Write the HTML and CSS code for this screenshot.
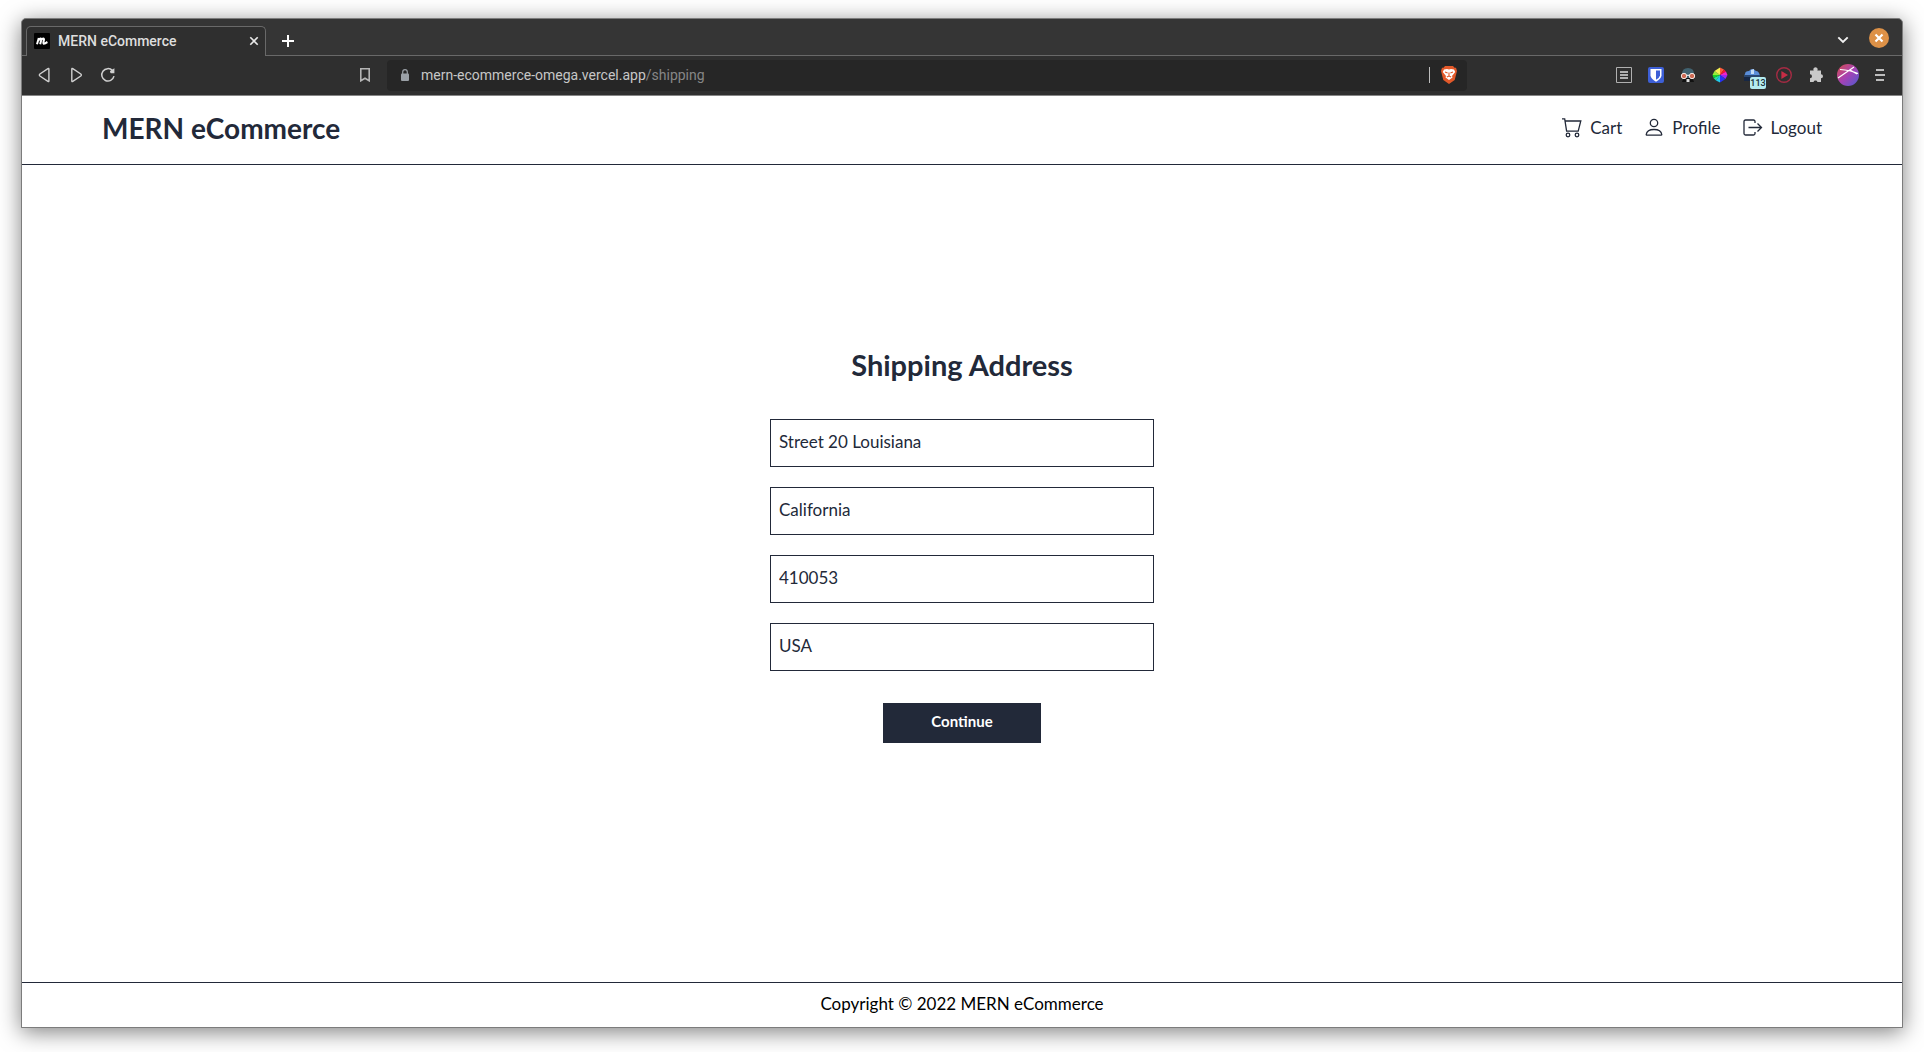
FILE: index.html
```html
<!DOCTYPE html>
<html lang="en">
<head>
<meta charset="utf-8">
<meta name="viewport" content="width=device-width, initial-scale=1">
<title>MERN eCommerce</title>
<link rel="stylesheet" href="styles.css">
</head>
<body>
<div class="window">
  <div class="tab-strip">
    <div class="tab">
      <svg class="favicon" viewBox="0 0 16 16" aria-hidden="true"><rect width="16" height="16" rx="1" fill="#000"/><path d="M3 11.200 4.800 5M4.400 7.600C5.600 5 7.800 4.800 7.200 7L6.200 11.200M6.900 7.600C8.200 5 10.600 4.800 9.900 7.200 9.200 9.600 9 11 10.400 10.600 11.600 10.200 12.300 9.600 13.400 9" fill="none" stroke="#fff" stroke-width="2"/></svg>
      <span class="tab-title">MERN eCommerce</span>
      <button class="icon-btn tab-close" type="button" aria-label="Close tab"><svg width="10" height="10" viewBox="0 0 10 10"><path d="M1.3 1.3 8.7 8.7M8.7 1.3 1.3 8.7" stroke="#e8e8e8" stroke-width="1.6"/></svg></button>
    </div>
    <button class="icon-btn new-tab" type="button" aria-label="New tab"><svg width="12" height="12" viewBox="0 0 12 12"><path d="M6 0v12M0 6h12" stroke="#fff" stroke-width="2"/></svg></button>
    <div class="window-controls">
      <button class="icon-btn tab-search" type="button" aria-label="Search tabs"><svg width="12" height="8" viewBox="0 0 12 8"><path d="M1.3 1.3 6 6l4.7-4.7" fill="none" stroke="#f2f2f2" stroke-width="1.9"/></svg></button>
      <button class="icon-btn" type="button" aria-label="Close window"><svg width="20" height="20" viewBox="0 0 20 20"><circle cx="10" cy="10" r="10" fill="#dd9147"/><path d="M6.5 6.5l7 7M13.5 6.5l-7 7" stroke="#fff" stroke-width="2.2"/></svg></button>
    </div>
  </div>
  <div class="toolbar">
    <div class="nav-tools">
      <button class="icon-btn" type="button" aria-label="Back"><svg width="16" height="16" viewBox="0 0 16 16"><path d="M12.9 2.1v11.800q0 1-1 .5L3.900 9q-1.100-1 0-2l8-5.400q1-.5 1 .5z" fill="none" stroke="#d0d0d0" stroke-width="1.4"/></svg></button>
      <button class="icon-btn" type="button" aria-label="Forward"><svg width="16" height="16" viewBox="0 0 16 16"><path d="M3.800 2.100v11.800q0 1 1 .5L12.800 9q1.100-1 0-2l-8-5.400q-1-.5-1 .5z" fill="none" stroke="#d0d0d0" stroke-width="1.4"/></svg></button>
      <button class="icon-btn" type="button" aria-label="Reload"><svg width="16" height="16" viewBox="0 0 16 16"><path d="M14 9.200A6.200 6.200 0 1 1 12.500 3.600" fill="none" stroke="#d0d0d0" stroke-width="1.5"/><path d="M14.400 1.200v5h-3.600q-1.800-2 .4-3z" fill="#d0d0d0"/></svg></button>
      <button class="icon-btn bookmark" type="button" aria-label="Bookmark this page"><svg width="12" height="14" viewBox="0 0 12 14"><path d="M1.800.8h8.400v12L6 10.300l-4.200 2.500z" fill="none" stroke="#b5b5b5" stroke-width="1.6"/></svg></button>
    </div>
    <div class="address">
      <svg class="lock" width="8" height="12" viewBox="0 0 8 12" aria-hidden="true"><rect y="4.500" width="8" height="7.500" rx="1" fill="#9aa0a6"/><path d="M1.700 5V3a2.300 2.300 0 0 1 4.600 0v2" fill="none" stroke="#9aa0a6" stroke-width="1.2"/></svg>
      <span class="url">mern-ecommerce-omega.vercel.app<span class="path">/shipping</span></span>
      <button class="icon-btn shields" type="button" aria-label="Brave Shields"><svg width="16" height="18" viewBox="0 0 16 18"><path d="M4 0h8l1.500 1.700H15L16 5l-2.300 9L8 18l-5.700-4L0 5l1-3.300h1.500z" fill="#e2592a"/><path d="M3 3.500l3-.5 2 .5 2-.5 3 .5L14.200 6 11 10l.5 1.500L8 14 4.500 11.500 5 10 1.800 6z" fill="#fff"/><path d="M4 6l2.600 1M12 6l-2.600 1M8 6.500v3.500M5.800 11l2.200-1 2.200 1" stroke="#e2592a" stroke-width="1.1" fill="none"/></svg></button>
    </div>
    <div class="extensions">
      <button class="icon-btn" type="button" aria-label="Reader list"><svg width="16" height="16" viewBox="0 0 16 16"><path d="M.5.5h15v15H.5z" fill="none" stroke="#b0b0b0"/><path d="M4 5h8M4 8h8M4 11h8" stroke="#b0b0b0" stroke-width="1.8"/></svg></button>
      <button class="icon-btn" type="button" aria-label="Bitwarden"><svg width="16" height="16" viewBox="0 0 16 16"><rect width="16" height="16" rx="2" fill="#3d5fd6"/><path d="M2.500 2h11v6.500Q13 12 8 14.800 3 12 2.500 8.500z" fill="#fff"/><path d="M8 3.600h4V8.500Q11.600 10.700 8 12.800z" fill="#3d5fd6"/></svg></button>
      <button class="icon-btn" type="button" aria-label="Incognito extension"><svg width="16" height="16" viewBox="0 0 16 16"><path d="M2 7Q2 1 8 1t6 6l-1 4H3z" fill="#416270"/><path d="M3.500 11h9L14 15H2z" fill="#111"/><path d="M6.500 12h3v3h-3z" fill="#ddd"/><circle cx="4" cy="9" r="2.700" fill="#cf6b55" stroke="#f2e8e3"/><circle cx="12" cy="9" r="2.700" fill="#cf6b55" stroke="#f2e8e3"/><path d="M7 8.300h2" stroke="#fff"/></svg></button>
      <button class="icon-btn" type="button" aria-label="Color picker"><svg width="16" height="16" viewBox="0 0 16 16"><path d="M8 8V.5l4 2z" fill="#ff5a3a"/><path d="M8 8l4-5.500 2 2z" fill="#f13"/><path d="M8 8l6-3.500L15.500 8z" fill="#f024c8"/><path d="M8 8h7.500l-2 4z" fill="#9d25f3"/><path d="M8 8l5.500 4L8 15.500z" fill="#2632f2"/><path d="M8 8v7.500l-4-2z" fill="#21c9ed"/><path d="M8 8l-4 5.500L1.500 11z" fill="#25e3a2"/><path d="M8 8l-6.500 3L.5 8z" fill="#19d52a"/><path d="M8 8H.5l2-4z" fill="#9aec39"/><path d="M8 8L2.500 4 8 .5z" fill="#f7ef51"/></svg></button>
      <button class="icon-btn counter" type="button" aria-label="Weather extension, 113"><svg width="16" height="16" viewBox="0 0 16 16"><path d="M1 7Q1 4 5 4q3-4 7 0 3 0 4 5H0z" fill="#5a8dd8"/><path d="M7 3l3-1v5H7z" fill="#c4dcf4"/><path d="M0 8h16v3H0z" fill="#29466f"/><path d="M0 10h16v4H0z" fill="#172744"/></svg><span class="badge">113</span></button>
      <button class="icon-btn" type="button" aria-label="Video extension"><svg width="16" height="16" viewBox="0 0 16 16"><circle cx="8" cy="8" r="7.300" fill="none" stroke="#a52b43" stroke-width="1.4"/><path d="M5.400 4l6.600 4-6.600 4z" fill="#c72c45"/></svg></button>
      <button class="icon-btn" type="button" aria-label="Extensions"><svg width="16" height="16" viewBox="0 0 16 16"><path d="M2 3.500h3.700a2.100 2.100 0 1 1 3.600 0H13v3.700a2 2 0 1 1 0 4V15H9.500a2.100 2.100 0 0 0-4 0H2v-3.700a2 2 0 0 0 0-4z" fill="#cacaca"/></svg></button>
      <button class="icon-btn" type="button" aria-label="Account"><svg width="22" height="22" viewBox="0 0 22 22"><defs><linearGradient id="avatar" x1="0" y1="0" x2="1" y2="1"><stop offset=".1" stop-color="#ce4b61"/><stop offset=".5" stop-color="#a642b4"/><stop offset="1" stop-color="#4d5bd0"/></linearGradient></defs><circle cx="11" cy="11" r="11" fill="url(#avatar)"/><path d="M3 5.500Q13 6 21 9.500M1 14 17 3M13 6l7 4" fill="none" stroke="#fff" stroke-width="1.2"/></svg></button>
      <button class="icon-btn" type="button" aria-label="Menu"><svg width="10" height="14" viewBox="0 0 10 14"><path d="M1 2h8M0 7h10M1 12h8" stroke="#bdbdbd" stroke-width="2"/></svg></button>
    </div>
  </div>
  <div class="page">
    <header class="site-header">
      <a class="brand" href="#">MERN eCommerce</a>
      <nav class="site-nav">
        <a href="#"><svg viewBox="0 0 20 20"><path d="M0 .8h2.700l1.900 12.400h11.600L18.800 3H3" /><circle cx="6" cy="17" r="1.800"/><circle cx="15" cy="17" r="1.800"/></svg>Cart</a>
        <a href="#"><svg viewBox="0 0 20 20"><circle cx="10" cy="5" r="3.700"/><path d="M2.200 16.500q.7-5 7.800-5t7.800 5q0 .7-.8.700H3q-.8 0-.8-.7z"/></svg>Profile</a>
        <a href="#"><svg viewBox="0 0 20 20"><path d="M13 5V3.500q0-1.500-1.500-1.500H3.500Q2 2 2 3.500v12Q2 17 3.500 17h8q1.500 0 1.500-1.500V14M6.500 9.500H19M15.500 5.500l4 4-4 4"/></svg>Logout</a>
      </nav>
    </header>
    <main class="content">
      <form class="shipping-form">
        <h1>Shipping Address</h1>
        <input type="text" aria-label="Address" value="Street 20 Louisiana">
        <input type="text" aria-label="City" value="California">
        <input type="text" aria-label="Postal code" value="410053">
        <input type="text" aria-label="Country" value="USA">
        <button class="continue" type="button">Continue</button>
      </form>
    </main>
    <footer class="site-footer">Copyright © 2022 MERN eCommerce</footer>
  </div>
</div>
</body>
</html>
```
FILE: styles.css
```css
* { box-sizing: border-box; }

body {
  margin: 0;
  min-height: 100vh;
  padding: 18px 21px 24px;
  display: flex;
  background: #fff;
  font-family: Lato, "Liberation Sans", sans-serif;
}

a { color: inherit; text-decoration: none; }

.window {
  flex: 1;
  min-width: 0;
  display: flex;
  flex-direction: column;
  border: 1px solid #7c7c7c;
  border-radius: 5px 5px 0 0;
  background: #353535;
  box-shadow: 0 4px 22px rgba(0, 0, 0, 0.5);
}

.icon-btn {
  display: flex;
  align-items: center;
  justify-content: center;
  width: 32px;
  height: 32px;
  padding: 0;
  border: 0;
  background: none;
  flex: none;
}

/* Browser chrome */
.tab-strip {
  display: flex;
  align-items: flex-end;
  height: 37px;
  padding-left: 4px;
  border-radius: 4px 4px 0 0;
  box-shadow: inset 0 -1px #696969;
}

.tab {
  display: flex;
  align-items: center;
  width: 240px;
  height: 30px;
  padding: 0 0 2px 7px;
  border: 1px solid #696969;
  border-bottom: 0;
  border-radius: 5px 5px 0 0;
  background: #2f2f2f;
}

.favicon { width: 16px; height: 16px; margin-right: 8px; }

.tab-title {
  flex: 1;
  color: #dedede;
  font: 500 14px/20px Roboto, sans-serif;
}

.tab-close { width: 22px; }
.new-tab { height: 30px; margin-left: 6px; }

.window-controls {
  display: flex;
  align-items: center;
  align-self: flex-start;
  height: 38px;
  gap: 4px;
  margin-left: auto;
  padding-right: 7px;
}

.tab-search { padding-top: 4px; }

.toolbar {
  display: grid;
  grid-template-columns: 359px minmax(0, 1fr) 429px;
  align-items: center;
  height: 40px;
  padding: 0 6px 1px;
  border-bottom: 1px solid #868686;
  background: #2f2f2f;
}

.nav-tools, .extensions { display: flex; align-items: center; }
.nav-tools { padding-right: 6px; }
.bookmark { margin-left: auto; }
.extensions { justify-content: flex-end; }

.address {
  display: flex;
  align-items: center;
  height: 31px;
  padding-left: 14px;
  border-radius: 4px;
  background: #262626;
}

.url {
  flex: 1;
  margin-left: 12px;
  color: #c6c6c6;
  font: 400 14px/20px Roboto, sans-serif;
}

.path { color: #868686; }

.shields {
  width: 38px;
  height: 16px;
  border-left: 1px solid #bdbdbd;
}

.counter { position: relative; }

.badge {
  position: absolute;
  right: 2px;
  bottom: 2px;
  width: 16px;
  border-radius: 2px;
  background: #b4ebef;
  color: #17303a;
  font: 500 9px/12px Roboto, sans-serif;
  text-align: center;
}

/* Shop page */
.page {
  flex: 1;
  display: flex;
  flex-direction: column;
  background: #fff;
  color: #222939;
}

.site-header {
  display: flex;
  align-items: center;
  justify-content: space-between;
  height: 69px;
  padding: 0 80px 5px;
  border-bottom: 1px solid #222939;
}

.brand { font-size: 28px; font-weight: 700; line-height: 36px; }

.site-nav { display: flex; gap: 22px; font-size: 17px; line-height: 24px; }
.site-nav a { display: flex; align-items: center; gap: 8px; }
.site-nav svg {
  width: 20px;
  height: 20px;
  fill: none;
  stroke: #222939;
  stroke-width: 1.3;
  overflow: visible;
}

.content {
  flex: 1;
  display: flex;
  align-items: center;
  justify-content: center;
  padding: 24px;
}

.shipping-form {
  display: flex;
  flex-direction: column;
  align-items: center;
  gap: 20px;
  width: 384px;
  padding-bottom: 58px;
}

.shipping-form h1 {
  margin: 0 0 16px;
  font-size: 29px;
  line-height: 36px;
}

.shipping-form input {
  width: 100%;
  height: 48px;
  padding: 0 8px 2px;
  border: 1px solid #222939;
  border-radius: 0;
  background: #fff;
  color: #222939;
  font: 400 17px/24px Lato, "Liberation Sans", sans-serif;
}

.continue {
  width: 158px;
  height: 40px;
  margin-top: 12px;
  padding: 0 0 4px;
  border: 0;
  background: #222939;
  color: #fff;
  font: 700 15px/20px Lato, "Liberation Sans", sans-serif;
}

.site-footer {
  height: 45px;
  padding-top: 8px;
  border-top: 1px solid #222939;
  color: #000;
  font-size: 17px;
  line-height: 26px;
  text-align: center;
}
```
